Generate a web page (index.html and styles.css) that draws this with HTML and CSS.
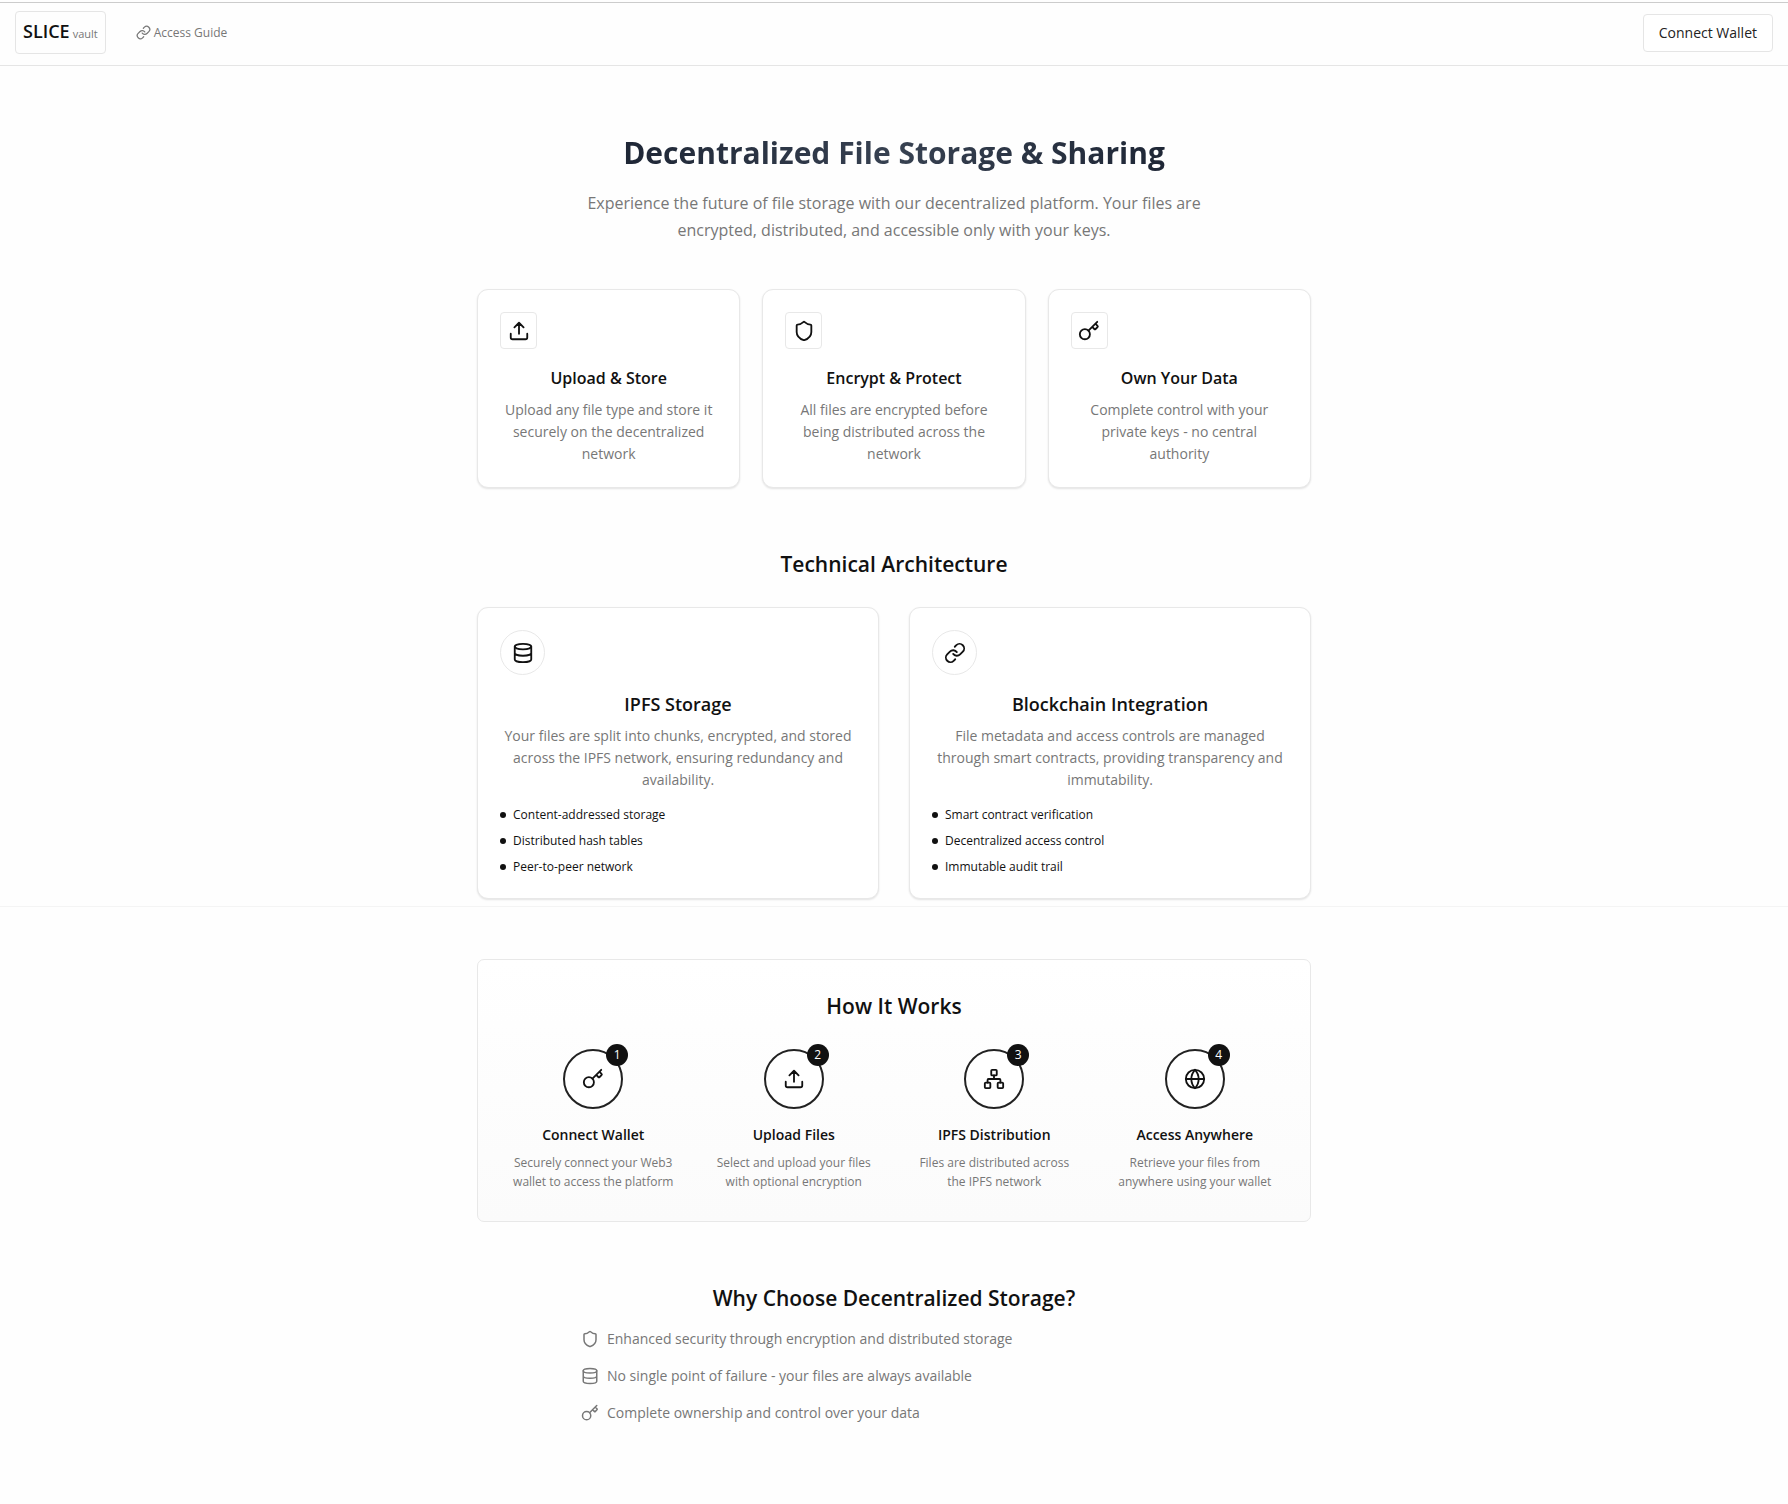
FILE: index.html
```html
<!DOCTYPE html>
<html lang="en">
<head>
<meta charset="utf-8">
<meta name="viewport" content="width=device-width, initial-scale=1">
<title>SLICE vault</title>
<link rel="stylesheet" href="styles.css">
</head>
<body>
<svg class="sprite" aria-hidden="true">
  <symbol id="i-link" viewBox="0 0 24 24"><path d="M10 13a5 5 0 0 0 7.54.54l3-3a5 5 0 0 0-7.07-7.07l-1.72 1.71"/><path d="M14 11a5 5 0 0 0-7.54-.54l-3 3a5 5 0 0 0 7.07 7.07l1.71-1.71"/></symbol>
  <symbol id="i-upload" viewBox="0 0 24 24"><path d="M12 15V3M7 8l5-5 5 5M21 15v4a2 2 0 0 1-2 2H5a2 2 0 0 1-2-2v-4"/></symbol>
  <symbol id="i-shield" viewBox="0 0 24 24"><path d="M20 13c0 5-3.500 7.500-7.660 8.950a1 1 0 0 1-.67-.01C7.500 20.500 4 18 4 13V6a1 1 0 0 1 1-1c2 0 4.500-1.200 6.240-2.720a1.170 1.170 0 0 1 1.520 0C14.510 3.810 17 5 19 5a1 1 0 0 1 1 1z"/></symbol>
  <symbol id="i-key" viewBox="0 0 24 24"><path d="m15.500 7.500 2.300 2.300a1 1 0 0 0 1.400 0l2.100-2.100a1 1 0 0 0 0-1.400L19 4M21 2l-9.600 9.600"/><circle cx="7.500" cy="15.500" r="5.500"/></symbol>
  <symbol id="i-database" viewBox="0 0 24 24"><ellipse cx="12" cy="5" rx="9" ry="3"/><path d="M3 5v14a9 3 0 0 0 18 0V5M3 12a9 3 0 0 0 18 0"/></symbol>
  <symbol id="i-network" viewBox="0 0 24 24"><rect x="16" y="16" width="6" height="6" rx="1"/><rect x="2" y="16" width="6" height="6" rx="1"/><rect x="9" y="2" width="6" height="6" rx="1"/><path d="M5 16v-3a1 1 0 0 1 1-1h12a1 1 0 0 1 1 1v3M12 12V8"/></symbol>
  <symbol id="i-globe" viewBox="0 0 24 24"><circle cx="12" cy="12" r="10"/><path d="M12 2a14.500 14.500 0 0 0 0 20 14.500 14.500 0 0 0 0-20M2 12h20"/></symbol>
</svg>

<header class="topbar">
  <a class="logo" href="#"><span class="logo-name">SLICE</span> <span class="logo-sub">vault</span></a>
  <nav class="nav"><a class="nav-link" href="#"><svg class="icon icon-sm"><use href="#i-link"/></svg>Access Guide</a></nav>
  <button class="connect" type="button">Connect Wallet</button>
</header>

<main>
  <div class="container">
    <section class="hero">
      <h1>Decentralized File Storage &amp; Sharing</h1>
      <p>Experience the future of file storage with our decentralized platform. Your files are encrypted, distributed, and accessible only with your keys.</p>
    </section>

    <section class="features">
      <article class="card">
        <span class="tile"><svg class="icon"><use href="#i-upload"/></svg></span>
        <h3>Upload &amp; Store</h3>
        <p>Upload any file type and store it securely on the decentralized network</p>
      </article>
      <article class="card">
        <span class="tile"><svg class="icon"><use href="#i-shield"/></svg></span>
        <h3>Encrypt &amp; Protect</h3>
        <p>All files are encrypted before being distributed across the network</p>
      </article>
      <article class="card">
        <span class="tile"><svg class="icon"><use href="#i-key"/></svg></span>
        <h3>Own Your Data</h3>
        <p>Complete control with your private keys - no central authority</p>
      </article>
    </section>

    <section>
      <h2>Technical Architecture</h2>
      <div class="architecture">
        <article class="card card-wide">
          <span class="tile tile-round"><svg class="icon"><use href="#i-database"/></svg></span>
          <h3>IPFS Storage</h3>
          <p>Your files are split into chunks, encrypted, and stored across the IPFS network, ensuring redundancy and availability.</p>
          <ul class="points">
            <li>Content-addressed storage</li>
            <li>Distributed hash tables</li>
            <li>Peer-to-peer network</li>
          </ul>
        </article>
        <article class="card card-wide">
          <span class="tile tile-round"><svg class="icon"><use href="#i-link"/></svg></span>
          <h3>Blockchain Integration</h3>
          <p>File metadata and access controls are managed through smart contracts, providing transparency and immutability.</p>
          <ul class="points">
            <li>Smart contract verification</li>
            <li>Decentralized access control</li>
            <li>Immutable audit trail</li>
          </ul>
        </article>
      </div>
    </section>
  </div>

  <hr class="divider">

  <div class="container">
    <section class="how">
      <h2>How It Works</h2>
      <ol class="steps">
        <li class="step">
          <span class="ring"><svg class="icon"><use href="#i-key"/></svg><span class="badge">1</span></span>
          <h4>Connect Wallet</h4>
          <p>Securely connect your Web3 wallet to access the platform</p>
        </li>
        <li class="step">
          <span class="ring"><svg class="icon"><use href="#i-upload"/></svg><span class="badge">2</span></span>
          <h4>Upload Files</h4>
          <p>Select and upload your files with optional encryption</p>
        </li>
        <li class="step">
          <span class="ring"><svg class="icon"><use href="#i-network"/></svg><span class="badge">3</span></span>
          <h4>IPFS Distribution</h4>
          <p>Files are distributed across the IPFS network</p>
        </li>
        <li class="step">
          <span class="ring"><svg class="icon"><use href="#i-globe"/></svg><span class="badge">4</span></span>
          <h4>Access Anywhere</h4>
          <p>Retrieve your files from anywhere using your wallet</p>
        </li>
      </ol>
    </section>

    <section class="why">
      <h2>Why Choose Decentralized Storage?</h2>
      <ul class="reasons">
        <li><svg class="icon icon-md"><use href="#i-shield"/></svg>Enhanced security through encryption and distributed storage</li>
        <li><svg class="icon icon-md"><use href="#i-database"/></svg>No single point of failure - your files are always available</li>
        <li><svg class="icon icon-md"><use href="#i-key"/></svg>Complete ownership and control over your data</li>
      </ul>
    </section>
  </div>
</main>
</body>
</html>
```
FILE: styles.css
```css
* { box-sizing: border-box; }
body, h1, h2, h3, h4, p, ul, ol { margin: 0; padding: 0; }
ul, ol { list-style: none; }

body {
  font-family: "Open Sans", "Noto Sans", sans-serif;
  font-size: 14px;
  line-height: 22px;
  color: #111;
  background: #fefefe;
}

.sprite { display: none; }

.icon {
  display: block;
  flex: none;
  width: 22px;
  height: 22px;
  fill: none;
  stroke: currentColor;
  stroke-width: 2;
  stroke-linecap: round;
  stroke-linejoin: round;
}
.icon-sm { width: 15px; height: 15px; }
.icon-md { width: 18px; height: 18px; }

.topbar {
  display: flex;
  align-items: center;
  gap: 30px;
  margin-top: 2px;
  padding: 8px 15px 11px;
  border-top: 1px solid #ccc;
  border-bottom: 1px solid #e5e5e5;
}
.logo {
  display: flex;
  align-items: baseline;
  gap: 3px;
  padding: 8px 7px;
  border: 1px solid #e5e5e5;
  border-radius: 4px;
  color: #111;
  text-decoration: none;
}
.logo-name { font-size: 18px; font-weight: 600; }
.logo-sub { font-size: 11px; color: #777; }
.nav {
  display: flex;
  flex: 1;
}
.nav-link {
  display: flex;
  align-items: center;
  gap: 3px;
  font-size: 12px;
  color: #777;
  text-decoration: none;
}
.connect {
  padding: 7px 15px;
  border: 1px solid #e5e5e5;
  border-radius: 4px;
  background: #fff;
  color: #222;
  font: inherit;
}

.container {
  max-width: 834px;
  margin: 0 auto;
}

.hero {
  padding: 64px 0 45px;
  text-align: center;
}
.hero h1 {
  margin-bottom: 14px;
  font-size: 30px;
  line-height: 46px;
  font-weight: 700;
  color: transparent;
  background: linear-gradient(90deg, #111827, #374151, #111827);
  background-clip: text;
  -webkit-background-clip: text;
}
.hero p {
  max-width: 626px;
  margin: 0 auto;
  font-size: 16px;
  line-height: 27px;
  color: #777;
}

h2 {
  font-size: 21px;
  line-height: 32px;
  font-weight: 600;
  text-align: center;
}

.features {
  display: grid;
  grid-template-columns: repeat(3, 1fr);
  gap: 22px;
  margin-bottom: 60px;
}
.architecture {
  display: grid;
  grid-template-columns: repeat(2, 1fr);
  gap: 30px;
  margin-top: 27px;
}

.card {
  padding: 22px;
  border: 1px solid #e8e8e8;
  border-radius: 11px;
  background: #fff;
  box-shadow: 0 1px 2px #0000001c;
  text-align: center;
}
.tile {
  display: flex;
  align-items: center;
  justify-content: center;
  width: 37px;
  height: 37px;
  border: 1px solid #e8e8e8;
  border-radius: 4px;
}
.tile-round {
  width: 45px;
  height: 45px;
  border-radius: 50%;
}
.card h3 {
  margin: 16px 0 8px;
  font-size: 16px;
  line-height: 26px;
  font-weight: 600;
}
.card-wide h3 { font-size: 18px; }
.card p { color: #777; }

.points {
  display: grid;
  gap: 7px;
  margin-top: 14px;
  font-size: 12px;
  line-height: 19px;
  text-align: left;
}
.points li {
  display: flex;
  align-items: center;
  gap: 7px;
}
.points li::before {
  content: "";
  width: 6px;
  height: 6px;
  border-radius: 50%;
  background: #111;
}

.divider {
  height: 1px;
  margin: 7px 0 52px;
  border: 0;
  background: #f4f4f4;
}

.how {
  padding: 30px;
  border: 1px solid #e8e8e8;
  border-radius: 7px;
  background: linear-gradient(#fff, #fbfbfb);
}
.steps {
  display: grid;
  grid-template-columns: repeat(4, 1fr);
  gap: 30px;
  margin-top: 27px;
}
.step { text-align: center; }
.ring {
  position: relative;
  display: flex;
  align-items: center;
  justify-content: center;
  width: 60px;
  height: 60px;
  margin: 0 auto 15px;
  border: 2px solid #222;
  border-radius: 50%;
  background: #fff;
}
.badge {
  position: absolute;
  top: -7px;
  right: -7px;
  width: 22px;
  height: 22px;
  border-radius: 50%;
  background: #111;
  color: #fff;
  font-size: 12px;
}
.step h4 {
  margin-bottom: 7px;
  font-size: 14px;
  font-weight: 600;
}
.step p {
  font-size: 12px;
  line-height: 19px;
  color: #777;
}

.why {
  max-width: 626px;
  margin: 0 auto;
  padding: 60px 0;
}
.reasons {
  display: grid;
  gap: 15px;
  margin-top: 14px;
  color: #777;
}
.reasons li {
  display: flex;
  align-items: center;
  gap: 8px;
}

@media (max-width: 860px) {
  .container { padding: 0 16px; }
  .features, .architecture { grid-template-columns: 1fr; }
  .steps { grid-template-columns: repeat(2, 1fr); }
}
```
